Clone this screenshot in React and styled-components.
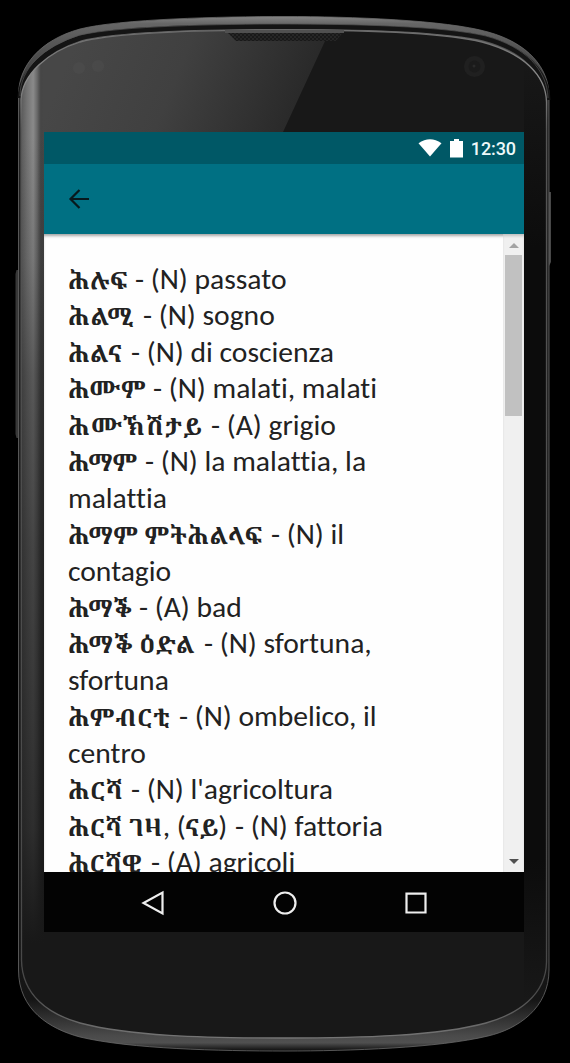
import styled, { createGlobalStyle } from "styled-components";

const lines = [
    { word: "ሕሉፍ", width: 67, text: "- (N) passato" },
    { word: "ሕልሚ", width: 75, wordSpacing: 0.5, text: "- (N) sogno" },
    { word: "ሕልና", width: 63, text: "- (N) di coscienza" },
    { word: "ሕሙም", width: 85, text: "- (N) malati, malati" },
    { word: "ሕሙኽሽታይ", width: 143, wordSpacing: 1.8, text: "- (A) grigio" },
    { word: "ሕማም", width: 77, text: "- (N) la malattia, la" },
    { text: "malattia" },
    { word: "ሕማም ምትሕልላፍ", width: 203, wordSpacing: 0.3, text: "- (N) il" },
    { text: "contagio" },
    { word: "ሕማቕ", width: 71, text: "- (A) bad" },
    { word: "ሕማቕ ዕድል", width: 136, wordSpacing: 0.3, text: "- (N) sfortuna," },
    { text: "sfortuna" },
    { word: "ሕምብርቲ", width: 111, wordSpacing: 1.4, text: "- (N) ombelico, il" },
    { text: "centro" },
    { word: "ሕርሻ", width: 63, wordSpacing: 0.7, text: "- (N) l'agricoltura" },
    { word: "ሕርሻ ገዛ, (ናይ)", width: 167, wordSpacing: 0.4, text: "- (N) fattoria" },
    { word: "ሕርሻዊ", width: 83, wordSpacing: 0.3, text: "- (A) agricoli" },
];

const OUTER = "M18.5 95C18.5 66 40 40 80 29C120 19 220 16.5 285 16.5C350 16.5 446 20 488 32C528 43 549 68 549 96V970C549 1008 518 1029 488 1036C438 1048 350 1051 285 1051C220 1051 130 1049 80 1037C50 1029 18.5 1010 18.5 970Z";
const FACE = "M21 100C22 74 48 52 80 42C120 31 220 30 285 30C350 30 438 31 482 42C523 53 546 75 546.5 102V962C546 995 518 1014 486 1023C438 1036 360 1038 285 1038C200 1038 130 1036 80 1023C48 1014 22 995 21.5 960Z";

function PhoneCase() {
    return (
        <Case viewBox="0 0 570 1063">
            <defs>
                <linearGradient id="rim" x1="0" y1="0" x2="0" y2="1">
                    <stop offset="0" stopColor="#858585" />
                    <stop offset="0.007" stopColor="#666" />
                    <stop offset="0.05" stopColor="#444" />
                    <stop offset="0.1" stopColor="#222" />
                    <stop offset="0.95" stopColor="#151515" />
                    <stop offset="0.985" stopColor="#4a4a4a" />
                    <stop offset="0.992" stopColor="#505050" />
                    <stop offset="1" stopColor="#0c0c0c" />
                </linearGradient>
                <linearGradient id="side" x1="20" x2="44" y1="0" y2="0" gradientUnits="userSpaceOnUse">
                    <stop offset="0" stopColor="#555" />
                    <stop offset="0.3" stopColor="#747474" />
                    <stop offset="0.55" stopColor="#8a8a8a" />
                    <stop offset="0.72" stopColor="#686868" />
                    <stop offset="0.87" stopColor="#454545" stopOpacity=".7" />
                    <stop offset="1" stopColor="#454545" stopOpacity="0" />
                </linearGradient>
                <linearGradient id="sideShade" x1="0" y1="60" x2="0" y2="1000" gradientUnits="userSpaceOnUse">
                    <stop offset="0.08" stopColor="#171717" stopOpacity="0" />
                    <stop offset="0.21" stopColor="#171717" stopOpacity="0.15" />
                    <stop offset="0.335" stopColor="#171717" stopOpacity="0.42" />
                    <stop offset="0.52" stopColor="#171717" stopOpacity="0.6" />
                    <stop offset="0.82" stopColor="#171717" stopOpacity="0.8" />
                    <stop offset="0.94" stopColor="#181818" />
                </linearGradient>
                <linearGradient id="glass" x1="80" y1="30" x2="300" y2="120" gradientUnits="userSpaceOnUse">
                    <stop offset="0" stopColor="#474747" />
                    <stop offset="0.45" stopColor="#404040" />
                    <stop offset="1" stopColor="#282828" />
                </linearGradient>
                <linearGradient id="rightShade" x1="0" y1="60" x2="0" y2="1000" gradientUnits="userSpaceOnUse">
                    <stop offset="0" stopColor="#0c0c0c" stopOpacity="0" />
                    <stop offset="0.2" stopColor="#0c0c0c" />
                    <stop offset="0.85" stopColor="#0c0c0c" />
                    <stop offset="1" stopColor="#0c0c0c" stopOpacity="0" />
                </linearGradient>
                <linearGradient id="edge" x1="0" y1="30" x2="0" y2="1040" gradientUnits="userSpaceOnUse">
                    <stop offset="0" stopColor="#6c6c6c" />
                    <stop offset="0.05" stopColor="#8c8c8c" />
                    <stop offset="0.1" stopColor="#555" />
                    <stop offset="0.95" stopColor="#484848" />
                    <stop offset="1" stopColor="#777" />
                </linearGradient>
                <pattern id="mesh" width="4" height="4" patternUnits="userSpaceOnUse">
                    <rect width="4" height="4" fill="#262626" />
                    <circle cx="1" cy="1" r="1" fill="#141414" />
                    <circle cx="3" cy="3" r="1" fill="#141414" />
                </pattern>
                <clipPath id="face"><path d={FACE} /></clipPath>
            </defs>
            <path d="M18 270h-1.5l-1 4v160l1 4h1.5z" fill="#383838" />
            <path d="M549 192h2v70l-2 4z" fill="#484848" />
            <path d={OUTER} fill="url(#rim)" stroke="#6a6a6a" strokeWidth=".8" />
            <path d="M20 98C21 71 46 49 80 38C120 28 220 26.5 285 26.5C350 26.5 440 28 484 38C525 49 547 72 548 100" fill="none" stroke="#141414" strokeWidth="5" />
            <path d="M20 96C20 68 44 46 80 35C120 26 220 24 285 24C350 24 444 26 486 36C526 47 547 70 548 98" fill="none" stroke="#555" strokeWidth=".7" />
            <g clipPath="url(#face)">
                <path d="M0 0h570v1063H0z" fill="#181818" />
                <path d="M0 0H344L283 132H44V1000H0z" fill="url(#glass)" />
                <path d="M18 60h26v940H18z" fill="url(#side)" />
                <path d="M18 132h26v910H18z" fill="url(#sideShade)" />
                <path d="M524 60h24v940h-24z" fill="url(#rightShade)" />
            </g>
            <path d={FACE} fill="none" stroke="url(#edge)" strokeWidth="1.3" />
            <path d="M226 31H344L336 41H236z" fill="url(#mesh)" />
            <path d="M225 31.5H344" stroke="#505050" strokeWidth="3" />
            <circle cx="79" cy="68" r="6" fill="#505050" opacity=".4" />
            <circle cx="98" cy="66" r="6" fill="#505050" opacity=".4" />
            <circle cx="474.5" cy="66.5" r="10.5" fill="#202020" />
            <circle cx="474.5" cy="66.5" r="6" fill="#1b1b1b" />
            <circle cx="474" cy="66" r="1.5" fill="#2a2a2a" />
        </Case>
    );
}

// punctuation and spaces inside a word keep the regular latin face
function renderWord(word) {
    return word.split(/([,() ]+)/).map((part, i) => (
        i % 2 ? <Punctuation key={i}>{part}</Punctuation> : part
    ));
}

function App() {
    return (
        <Page>
            <GlobalStyle />
            <PhoneCase />
            <Screen>
                <StatusBar>
                    <svg width="24" height="20" viewBox="0 0 24 20">
                        <path d="M.5 5.2Q12-2.6 23.5 5.2L12 18.5Z" fill="#fff" />
                    </svg>
                    <svg width="13" height="20" viewBox="0 0 13 20">
                        <path d="M0 3h4V1h5v2h4v16.5H0z" fill="#fff" />
                    </svg>
                    <p>12:30</p>
                </StatusBar>
                <AppBar>
                    <svg width="22" height="22" viewBox="0 0 22 22" fill="none" stroke="#07191d" strokeWidth="2.2">
                        <path d="M21 11H2.5M11.5 2L2.5 11l9 9" />
                    </svg>
                </AppBar>
                <Main>
                    <WordList>
                        {lines.map((line, i) => (
                            <Line key={i}>
                                {line.word && (
                                    <Word $width={line.width} $spacing={line.wordSpacing}>{renderWord(line.word)}</Word>
                                )}
                                <span>{line.text}</span>
                            </Line>
                        ))}
                    </WordList>
                    <Scrollbar>
                        <svg width="10" height="5" viewBox="0 0 10 5"><path d="M0 5l5-5 5 5z" fill="#a3a3a3" /></svg>
                        <Thumb />
                        <svg width="10" height="5" viewBox="0 0 10 5"><path d="M0 0l5 5 5-5z" fill="#505050" /></svg>
                    </Scrollbar>
                </Main>
                <NavBar>
                    <svg width="24" height="26" viewBox="0 0 24 26"><path d="M21.5 2.5v21L2.5 13z" /></svg>
                    <svg width="24" height="26" viewBox="0 0 24 26"><circle cx="12" cy="13" r="10.5" /></svg>
                    <svg width="24" height="26" viewBox="0 0 24 26"><path d="M2.5 3.7h19v18.8h-19z" /></svg>
                </NavBar>
            </Screen>
        </Page>
    );
}

const GlobalStyle = createGlobalStyle`
    body {
        margin: 0;
        background: #000;
    }
`

const Page = styled.div`
    position: relative;
    width: 570px;
    height: 1063px;
    padding: 132px 46px 0 44px;
    box-sizing: border-box;
    overflow: hidden;
    background: #000;
`

const Case = styled.svg`
    position: absolute;
    left: 0;
    top: 0;
    width: 570px;
    height: 1063px;
`

const Screen = styled.div`
    position: relative;
    width: 480px;
    height: 800px;
    display: flex;
    flex-direction: column;
`

const StatusBar = styled.header`
    height: 32px;
    padding-right: 8px;
    display: flex;
    justify-content: flex-end;
    align-items: center;
    background: #005866;

    svg + svg {
        margin-left: 8px;
    }

    p {
        margin: 2px 0 0 8px;
        font-family: 'Roboto', sans-serif;
        font-weight: 500;
        font-size: 18px;
        line-height: 22px;
        letter-spacing: -0.1px;
        color: #eef8f9;
    }
`

const AppBar = styled.div`
    height: 70px;
    padding-left: 24px;
    box-sizing: border-box;
    display: flex;
    align-items: center;
    background: #007083;
`

const Main = styled.main`
    height: 638px;
    display: flex;
    overflow: hidden;
    background: #fefefe;
    box-shadow: inset 0 3px 3px -1px rgba(0, 0, 0, 0.35);
`

const WordList = styled.div`
    width: 459px;
    padding: 27px 0 0 24px;
    box-sizing: border-box;
`

const Line = styled.div`
    height: 36.44px;
    display: flex;
    align-items: baseline;
    font-family: 'Carlito', 'Lato', sans-serif;
    font-size: 29.6px;
    line-height: 36.44px;
    font-variant-ligatures: none;
    white-space: nowrap;
    color: #222;
`

const Word = styled.span`
    flex: none;
    width: ${props => props.$width}px;
    font-family: 'Noto Serif Ethiopic', 'Abyssinica SIL', 'Noto Sans Ethiopic', 'Lato', sans-serif;
    font-size: 24px;
    font-weight: 700;
    letter-spacing: ${props => props.$spacing || 0}px;
`

const Punctuation = styled.span`
    font-family: 'Carlito', 'Lato', sans-serif;
    font-size: 29.6px;
    font-weight: 400;
    line-height: 1;
    letter-spacing: 0;
`

const Scrollbar = styled.div`
    width: 21px;
    padding: 9px 0 8px;
    box-sizing: border-box;
    display: flex;
    flex-direction: column;
    align-items: center;
    background: #f0f0f0;
    box-shadow: inset 0 3px 3px -1px rgba(0, 0, 0, 0.2);

    svg:last-child {
        margin-top: auto;
    }
`

const Thumb = styled.div`
    width: 17px;
    height: 161px;
    margin-top: 7px;
    background: #c1c1c1;
`

const NavBar = styled.footer`
    height: 60px;
    padding: 2px 96px 0 97px;
    box-sizing: border-box;
    display: flex;
    justify-content: space-between;
    align-items: center;
    background: #030303;

    svg {
        fill: none;
        stroke: #eee;
        stroke-width: 2.2;
    }
`

export default App;
